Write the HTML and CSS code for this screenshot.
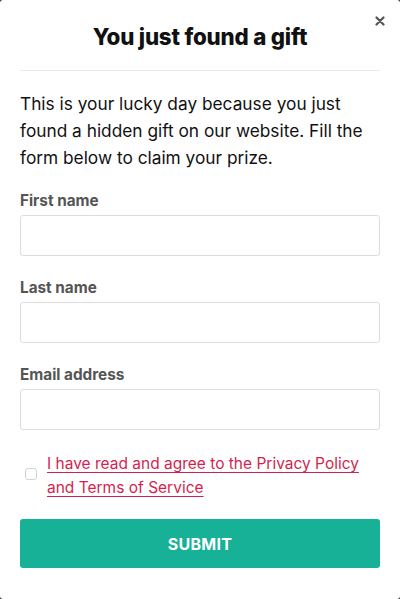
FILE: index.html
```html
<!DOCTYPE html>
<html>
<head>
<meta charset="utf-8">
<link rel="stylesheet" href="styles.css">
</head>
<body>
<div class="modal">
  <button class="close" aria-label="Close">
    <svg width="10" height="10" viewBox="0 0 10 10"><path d="M1.5 1.5 L8.5 8.5 M8.5 1.5 L1.5 8.5" stroke="#555" stroke-width="2.2" stroke-linecap="round"/></svg>
  </button>
  <h1 class="title">You just found a gift</h1>
  <hr class="divider">
  <p class="intro">This is your lucky day because you just found a hidden gift on our website. Fill the form below to claim your prize.</p>
  <form class="form">
    <label class="field">
      <span class="label">First name</span>
      <input class="input" type="text">
    </label>
    <label class="field">
      <span class="label">Last name</span>
      <input class="input" type="text">
    </label>
    <label class="field">
      <span class="label">Email address</span>
      <input class="input" type="email">
    </label>
    <div class="consent">
      <input class="check" type="checkbox">
      <a class="link" href="#">I have read and agree to the Privacy Policy and Terms of Service</a>
    </div>
    <button class="submit" type="button">SUBMIT</button>
  </form>
</div>
</body>
</html>
```
FILE: styles.css
```css
html, body {
  margin: 0;
  padding: 0;
  background: #2a2a2a;
}
body {
  font-family: Inter, "Noto Sans", sans-serif;
}
.modal {
  position: relative;
  box-sizing: border-box;
  width: 400px;
  height: 599px;
  background: #fff;
  border-radius: 3px;
  padding: 22px 20px 20px;
}
.close {
  position: absolute;
  top: 16px;
  right: 15px;
  width: 10px;
  height: 10px;
  padding: 0;
  border: 0;
  background: none;
  display: flex;
}
.title {
  margin: 0;
  text-align: center;
  font-size: 22.3px;
  font-weight: 800;
  line-height: 30px;
  letter-spacing: -0.2px;
  color: #111;
}
.divider {
  margin: 18px 0 0;
  border: 0;
  border-top: 1px solid #e9e9e9;
}
.intro {
  margin: 19px 0 0;
  font-size: 17.3px;
  line-height: 27px;
  color: #111;
}
.form {
  display: flex;
  flex-direction: column;
  margin-top: 20px;
}
.field {
  display: flex;
  flex-direction: column;
  gap: 4px;
  margin-bottom: 22px;
}
.label {
  font-size: 15.3px;
  font-weight: 700;
  line-height: 20px;
  color: #555;
}
.input {
  box-sizing: border-box;
  height: 41px;
  margin: 0;
  border: 1px solid #ddd;
  border-radius: 3px;
  background: #fff;
  font: inherit;
}
.consent {
  display: flex;
  align-items: flex-start;
  gap: 10px;
}
.check {
  appearance: none;
  -webkit-appearance: none;
  box-sizing: border-box;
  margin: 16px 0 0 5px;
  width: 12px;
  height: 12px;
  flex: none;
  border: 1.5px solid #d2d2d2;
  border-radius: 3px;
  background: #fff;
}
.link {
  font-size: 15.5px;
  line-height: 24px;
  color: #d41f4f;
  text-decoration: underline;
  text-underline-offset: 3px;
  text-decoration-thickness: 1px;
}
.submit {
  margin-top: 19px;
  height: 49px;
  border: 0;
  border-radius: 3px;
  background: #16b196;
  color: #fff;
  font-family: inherit;
  font-size: 16px;
  font-weight: 700;
  letter-spacing: 0.3px;
}
```
